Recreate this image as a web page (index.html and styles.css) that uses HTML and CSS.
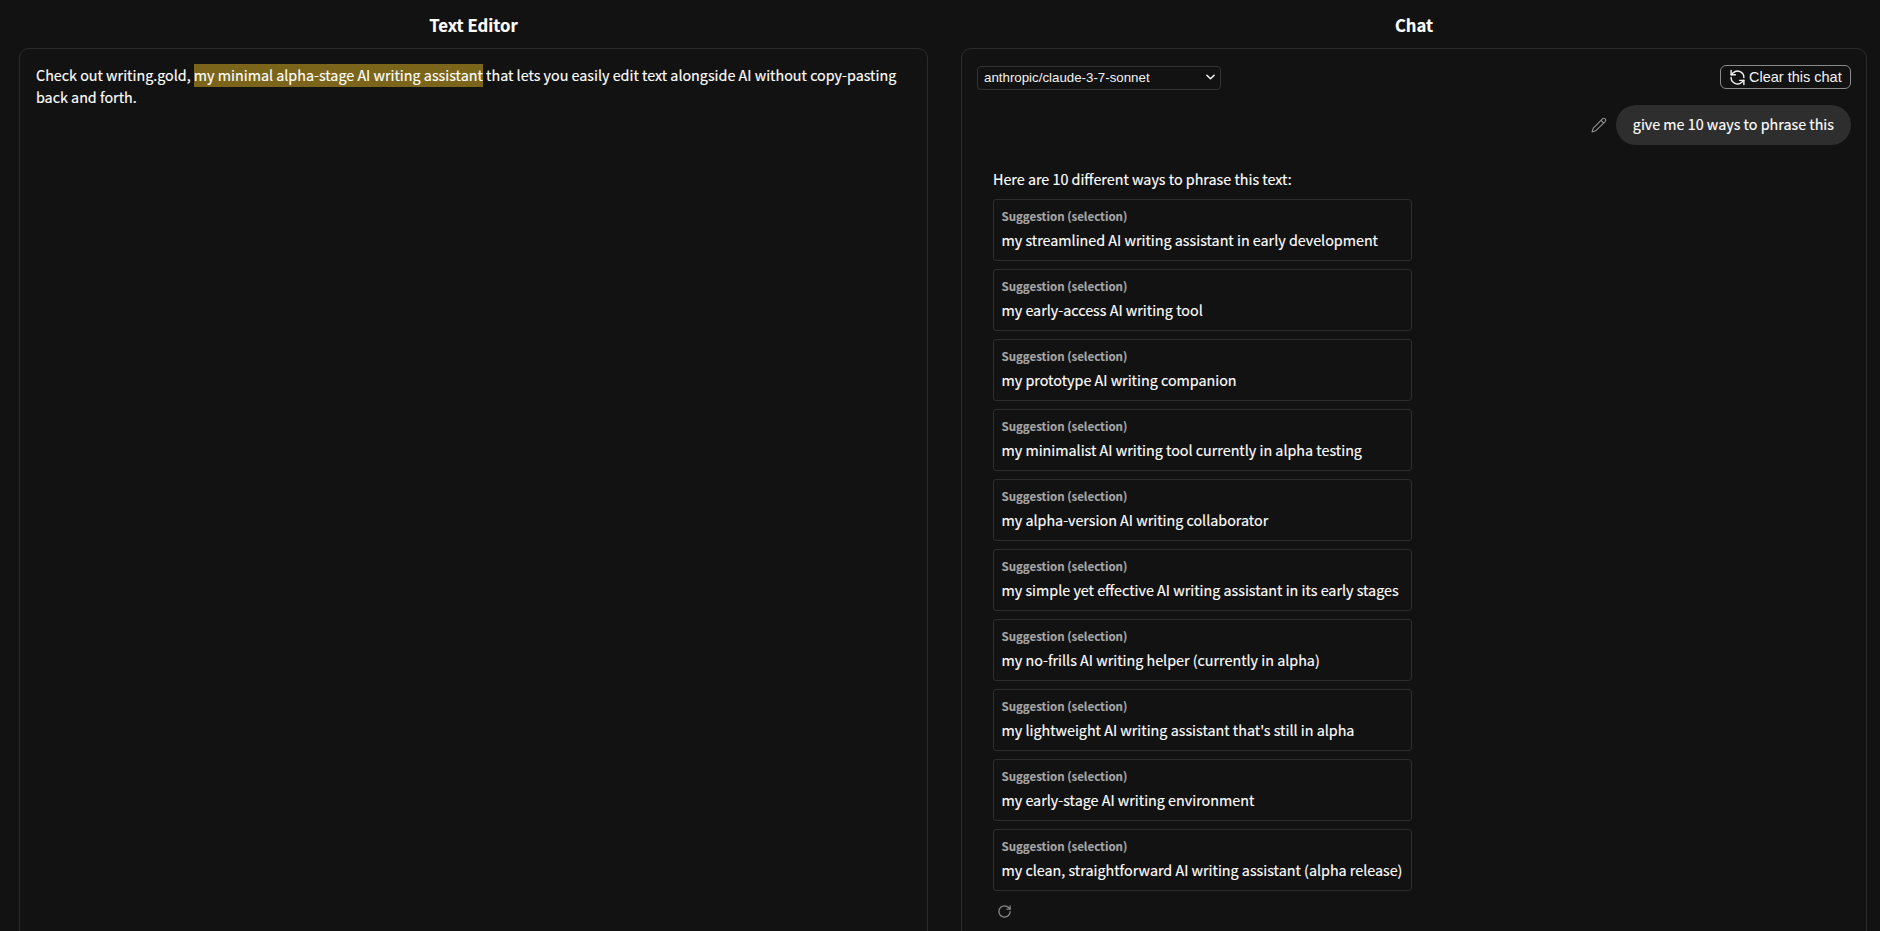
FILE: index.html
```html
<!DOCTYPE html>
<html lang="en">
<head>
<meta charset="utf-8">
<title>writing.gold</title>
<link rel="stylesheet" href="styles.css">
</head>
<body>
<div class="app">
  <section class="col col-editor">
    <h2 class="title">Text Editor</h2>
    <div class="panel editor">Check out writing.gold, <span class="hl">my minimal alpha-stage AI writing assistant</span> that lets you easily edit text alongside AI without copy-pasting back and forth.</div>
  </section>
  <section class="col col-chat">
    <h2 class="title">Chat</h2>
    <div class="panel chat">
      <div class="toolbar">
        <div class="select-wrap">
          <select class="model"><option>anthropic/claude-3-7-sonnet</option></select>
          <svg class="chevron" viewBox="0 0 10 6" fill="none" stroke="currentColor" stroke-width="1.7" stroke-linecap="round" stroke-linejoin="round"><path d="M1 1l4 4 4-4"/></svg>
        </div>
        <button class="clear">
          <svg class="clear-icon" viewBox="0 0 24 24" fill="none" stroke="currentColor" stroke-width="2" stroke-linecap="round" stroke-linejoin="round"><path d="M3 2v6h6"/><path d="M21 12A9 9 0 0 0 6 5.3L3 8"/><path d="M21 22v-6h-6"/><path d="M3 12a9 9 0 0 0 15 6.7l3-2.7"/></svg>
          Clear this chat
        </button>
      </div>
      <div class="user-row">
        <svg class="pencil" viewBox="0 0 24 24" fill="none" stroke="currentColor" stroke-width="1.6" stroke-linecap="round" stroke-linejoin="round"><path d="M21.2 6.8a2.8 2.8 0 0 0-4-4L3.8 16.2a2 2 0 0 0-.5.8L1.5 22.5l5.5-1.8a2 2 0 0 0 .8-.5z"/><path d="m15 5 4 4"/></svg>
        <div class="bubble">give me 10 ways to phrase this</div>
      </div>
      <div class="reply">
        <p class="intro">Here are 10 different ways to phrase this text:</p>
        <div class="card"><div class="label">Suggestion (selection)</div><div class="text">my streamlined AI writing assistant in early development</div></div>
        <div class="card"><div class="label">Suggestion (selection)</div><div class="text">my early-access AI writing tool</div></div>
        <div class="card"><div class="label">Suggestion (selection)</div><div class="text">my prototype AI writing companion</div></div>
        <div class="card"><div class="label">Suggestion (selection)</div><div class="text">my minimalist AI writing tool currently in alpha testing</div></div>
        <div class="card"><div class="label">Suggestion (selection)</div><div class="text">my alpha-version AI writing collaborator</div></div>
        <div class="card"><div class="label">Suggestion (selection)</div><div class="text">my simple yet effective AI writing assistant in its early stages</div></div>
        <div class="card"><div class="label">Suggestion (selection)</div><div class="text">my no-frills AI writing helper (currently in alpha)</div></div>
        <div class="card"><div class="label">Suggestion (selection)</div><div class="text">my lightweight AI writing assistant that's still in alpha</div></div>
        <div class="card"><div class="label">Suggestion (selection)</div><div class="text">my early-stage AI writing environment</div></div>
        <div class="card"><div class="label">Suggestion (selection)</div><div class="text">my clean, straightforward AI writing assistant (alpha release)</div></div>
        <svg class="regen" viewBox="0 0 24 24" fill="none" stroke="currentColor" stroke-width="2" stroke-linecap="round" stroke-linejoin="round"><path d="M21 12a9 9 0 1 1-9-9c2.5 0 4.9 1 6.7 2.7L21 8"/><path d="M21 3v5h-5"/></svg>
      </div>
    </div>
  </section>
</div>
</body>
</html>
```
FILE: styles.css
```css
* { box-sizing: border-box; }
html, body { margin: 0; height: 100%; overflow: hidden; }
body {
  background: #121212;
  color: #fff;
  font-family: "Noto Sans CJK SC", "Noto Sans", sans-serif;
  font-size: 14.32px;
  font-weight: 400;
  line-height: 22px;
  -webkit-text-stroke: 0.15px currentColor;
}
.app {
  display: grid;
  grid-template-columns: 909px 906px;
  column-gap: 33px;
  padding: 0 13px 0 19px;
  height: 931px;
  overflow: hidden;
}
.col { display: flex; flex-direction: column; min-width: 0; }
.title {
  margin: 0;
  height: 48px;
  padding-top: 14px;
  font-size: 16.7px;
  font-weight: 700;
  line-height: 22px;
  text-align: center;
  color: #fff;
}
.panel {
  flex: none;
  height: 920px;
  border: 1px solid #2b2b2b;
  border-radius: 10px;
  background: #121212;
}
.editor { padding: 15px 16px; }
.hl { padding: 0 0 2px; background: #7a651a; }
.chat { padding: 16px 15px 0; }
.toolbar { display: flex; justify-content: space-between; align-items: center; height: 24px; }
.select-wrap { position: relative; width: 244px; height: 24px; }
.model {
  appearance: none;
  width: 100%;
  height: 100%;
  padding: 0 6px;
  background: #121212;
  color: #f2f2f2;
  border: 1px solid #333;
  border-radius: 4px;
  font-family: "Liberation Sans", Arial, sans-serif;
  font-size: 13.3px;
  -webkit-text-stroke: 0;
}
.chevron { position: absolute; right: 6px; top: 9px; width: 9px; height: 6px; color: #f2f2f2; pointer-events: none; }
.clear {
  display: flex;
  align-items: center;
  gap: 3px;
  width: 131px;
  height: 24px;
  padding: 0 8px;
  background: transparent;
  color: #f2f2f2;
  border: 1px solid #8a8a8a;
  border-radius: 6px;
  font-family: "Liberation Sans", Arial, sans-serif;
  font-size: 14.5px;
  white-space: nowrap;
  -webkit-text-stroke: 0;
}
.clear-icon { width: 17px; height: 17px; flex: none; }
.user-row { display: flex; justify-content: flex-end; align-items: center; gap: 9px; margin-top: 16px; }
.pencil { width: 16px; height: 16px; color: #8f8f8f; }
.bubble {
  height: 40px;
  padding: 8px 17px;
  border-radius: 20px;
  background: #2e2e2e;
}
.reply { margin-top: 23px; padding-left: 16px; }
.intro { margin: 0 0 9px; }
.card {
  width: 419px;
  height: 62px;
  margin-bottom: 8px;
  padding: 7px 7.5px;
  border: 1px solid #2d2d2d;
  border-radius: 3px;
}
.label { font-size: 11.5px; font-weight: 700; line-height: 18px; color: #a6a6a6; margin-bottom: 4px; }
.text { white-space: nowrap; }
.regen { display: block; width: 15px; height: 15px; margin: 13px 0 0 4px; color: #8a8a8a; }
```
